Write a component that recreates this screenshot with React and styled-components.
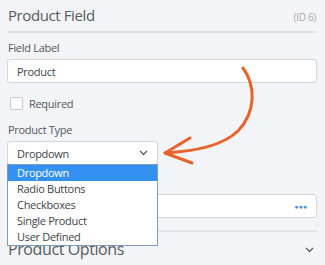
import React from 'react';
import styled, { createGlobalStyle } from 'styled-components';

const Global = createGlobalStyle`
  html, body {
    margin: 0;
    padding: 0;
    background: #f3f4f7;
    font-family: "Open Sans", "Noto Sans", sans-serif;
    color: #50575e;
    letter-spacing: -0.3px;
  }
`;

const Panel = styled.div`
  position: relative;
  width: 325px;
  height: 265px;
  overflow: hidden;
  padding: 0 8px 0 7px;
  box-sizing: border-box;
`;

const Header = styled.div`
  display: flex;
  justify-content: space-between;
  align-items: baseline;
  height: 33px;
  border-bottom: 2px solid #e3e4e8;
  padding: 0 1px;
  box-sizing: border-box;
`;

const Title = styled.div`
  font-size: ${p => p.size || 15}px;
  line-height: 31px;
  color: #555b61;
  letter-spacing: -0.4px;
`;

const IdTag = styled.span`
  font-size: 10px;
  color: #a7aaad;
`;

const Label = styled.div`
  font-size: 11px;
  line-height: 14px;
  margin: ${p => p.top || 0}px 0 4px 1px;
  color: #50575e;
`;

const Input = styled.div`
  height: 24px;
  box-sizing: border-box;
  background: #fff;
  border: 1px solid #d5d6d9;
  border-radius: 3px;
  display: flex;
  align-items: center;
  justify-content: space-between;
  padding: 0 9px;
  font-size: 11px;
  color: #3c434a;
`;

const CheckRow = styled.label`
  display: flex;
  align-items: center;
  gap: 6px;
  margin: 13px 0 0 3px;
  font-size: 11px;
  color: #50575e;
`;

const Box = styled.span`
  width: 11px;
  height: 11px;
  border: 1px solid #c8c9cc;
  border-radius: 2px;
  background: #fff;
`;

const SelectWrap = styled.div`
  position: relative;
  width: 151px;
`;

const Menu = styled.ul`
  position: absolute;
  left: 0;
  top: 23px;
  width: 151px;
  box-sizing: border-box;
  margin: 0;
  padding: 0;
  list-style: none;
  background: #fff;
  border: 1px solid #7f9db9;
  z-index: 2;
`;

const Option = styled.li`
  height: 16px;
  line-height: 16px;
  padding-left: 9px;
  font-size: 11px;
  color: ${p => (p.active ? '#fff' : '#3c434a')};
  background: ${p => (p.active ? '#3392f0' : '#fff')};
`;

const Dots = styled.span`
  color: #4a90d9;
  font-size: 7px;
  letter-spacing: 0;
  font-weight: bold;
`;

const Divider = styled.div`
  height: 2px;
  background: #e3e4e8;
  margin-top: 12px;
`;

const Section = styled.div`
  display: flex;
  justify-content: space-between;
  align-items: center;
  padding: 0 3px 0 1px;
  margin-top: 2px;
`;

const Arrow = styled.svg`
  position: absolute;
  left: 0;
  top: 0;
  pointer-events: none;
  z-index: 3;
`;

const Chevron = ({ size = 9 }) => (
  <svg width={size} height={size * 0.6} viewBox="0 0 10 6">
    <path d="M1 1l4 4 4-4" fill="none" stroke="#50575e" strokeWidth="1.5" />
  </svg>
);

const options = ['Dropdown', 'Radio Buttons', 'Checkboxes', 'Single Product', 'User Defined'];

export default function App() {
  return (
    <Panel>
      <Global />
      <Header>
        <Title>Product Field</Title>
        <IdTag>(ID 6)</IdTag>
      </Header>
      <Label top={8}>Field Label</Label>
      <Input>Product</Input>
      <CheckRow>
        <Box />
        Required
      </CheckRow>
      <Label top={12}>Product Type</Label>
      <SelectWrap>
        <Input>
          Dropdown
          <Chevron />
        </Input>
        <Menu>
          {options.map((o, i) => (
            <Option key={o} active={i === 0}>{o}</Option>
          ))}
        </Menu>
      </SelectWrap>
      <Label top={11}>Price</Label>
      <Input>
        <span />
        <Dots>●●●</Dots>
      </Input>
      <Divider />
      <Section>
        <Title size={16}>Product Options</Title>
        <Chevron />
      </Section>
      <Arrow width="325" height="265">
        <path
          d="M243 68 C 256 86, 256 112, 238 131 C 222 146, 196 151, 165 153"
          fill="none"
          stroke="#e8622a"
          strokeWidth="3"
          strokeLinecap="round"
        />
        <path
          d="M190 138 L165 153 L192 163"
          fill="none"
          stroke="#e8622a"
          strokeWidth="3"
          strokeLinecap="round"
          strokeLinejoin="round"
        />
      </Arrow>
    </Panel>
  );
}
